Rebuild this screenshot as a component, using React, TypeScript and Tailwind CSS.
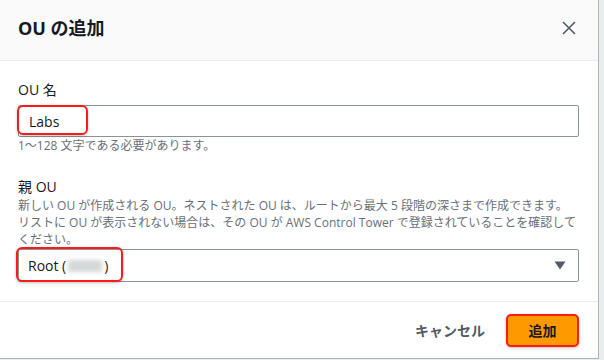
const font = "font-['Open_Sans','Noto_Sans_CJK_JP',sans-serif]";

function Highlight({ children, className = "" }: { children?: React.ReactNode; className?: string }) {
  return (
    <div
      className={`absolute rounded-[6px] border-2 border-[#ff1a1a] shadow-[0_1px_3px_rgba(0,0,0,0.25)] ${className}`}
    >
      {children}
    </div>
  );
}

export default function App() {
  return (
    <div className={`w-[604px] h-[360px] flex bg-[#eaeded] ${font} text-[#16191f]`}>
      <div className="w-[599px] h-[359px] flex flex-col bg-white border-r border-b border-[#aab7b8]">
        <header className="h-[61px] shrink-0 flex items-center justify-between pl-[18px] pr-[22px] bg-[#fafafa] border-b border-[#eaeded]">
          <h1 className="text-[18px] font-bold leading-none -mt-[4px]">OU の追加</h1>
          <svg width="14" height="14" viewBox="0 0 14 14" className="-mt-[4px]">
            <path d="M1 1L13 13M13 1L1 13" stroke="#545b64" strokeWidth="1.6" />
          </svg>
        </header>

        <main className="flex-1 flex flex-col pl-[18px] pr-[19px] pt-[19px]">
          <label className="text-[14px] leading-[20px]">OU 名</label>
          <div className="relative mt-[5px] h-[32px] border border-[#879596] rounded-[2px] flex items-center pl-[10px] text-[14px]">
            Labs
            <Highlight className="-left-[2px] -top-[1px] w-[71px] h-[30px]" />
          </div>
          <p className="text-[12px] leading-[18px] text-[#687078]">1〜128 文字である必要があります。</p>

          <label className="mt-[22px] text-[14px] leading-[20px]">親 OU</label>
          <p className="text-[12px] leading-[17px] text-[#687078] whitespace-nowrap">
            新しい OU が作成される OU。ネストされた OU は、ルートから最大 5 段階の深さまで作成できます。
            <br />
            リストに OU が表示されない場合は、その OU が AWS Control Tower で登録されていることを確認して
            <br />
            ください。
          </p>
          <div className="relative mt-[1px] h-[33px] border border-[#879596] rounded-[2px] flex items-center justify-between pl-[9px] pr-[12px] text-[14px]">
            <span className="flex items-center">
              Root (
              <span className="inline-block w-[34px] h-[12px] mx-[2px] bg-[#d5d8d8] blur-[2px]" />
              )
            </span>
            <svg width="12" height="9" viewBox="0 0 12 9">
              <path d="M0.5 0.5H11.5L6 8.5Z" fill="#545b64" />
            </svg>
            <Highlight className="-left-[3px] -top-[3px] w-[107px] h-[35px]" />
          </div>
        </main>

        <footer className="h-[57px] shrink-0 flex items-center justify-end gap-[21px] pr-[19px] border-t border-[#eaeded]">
          <button className="text-[14px] font-bold text-[#545b64]">キャンセル</button>
          <button className="w-[73px] h-[33px] mt-[1px] rounded-[5px] border-2 border-[#ff1a1a] bg-[#ff9900] text-[14px] font-bold text-[#16191f] shadow-[0_1px_3px_rgba(0,0,0,0.25)]">
            追加
          </button>
        </footer>
      </div>
    </div>
  );
}
